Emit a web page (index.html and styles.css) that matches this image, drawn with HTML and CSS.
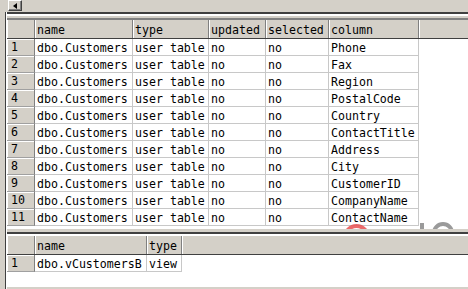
FILE: index.html
```html
<!DOCTYPE html>
<html lang="en">
<head>
    <meta charset="UTF-8">
    <title>Query Results</title>
    <link rel="stylesheet" href="styles.css">
</head>
<body>

<div class="window">
    <div class="hscroll">
        <div class="arrow-btn"><span class="arrow"></span></div>
    </div>

    <div class="body-row">
        <div class="edge"></div>

        <div class="panes">
            <div class="pane-lines"></div>

            <!-- first result set -->
            <div class="grid-pane grid-main">
                <div class="grid-row head cols-main">
                    <div class="cell rn"></div>
                    <div class="cell hd">name</div>
                    <div class="cell hd">type</div>
                    <div class="cell hd">updated</div>
                    <div class="cell hd">selected</div>
                    <div class="cell hd">column</div>
                    <div class="cell hd filler"></div>
                </div>
                <div id="mainRows"></div>

                <div class="mark mark-red"></div>
                <div class="mark mark-bar"></div>
                <div class="mark mark-ring"></div>
            </div>

            <div class="splitter"></div>

            <!-- second result set -->
            <div class="grid-pane grid-views">
                <div class="grid-row head cols-views">
                    <div class="cell rn"></div>
                    <div class="cell hd">name</div>
                    <div class="cell hd">type</div>
                    <div class="cell hd filler"></div>
                </div>
                <div class="grid-row cols-views">
                    <div class="cell rn">1</div>
                    <div class="cell">dbo.vCustomersB</div>
                    <div class="cell">view</div>
                    <div class="cell filler"></div>
                </div>
            </div>
        </div>
    </div>
</div>

<script>
    const columns = ["Phone", "Fax", "Region", "PostalCode", "Country", "ContactTitle",
                     "Address", "City", "CustomerID", "CompanyName", "ContactName"];

    const mainRows = document.getElementById("mainRows");
    columns.forEach((col, i) => {
        const row = document.createElement("div");
        row.className = "grid-row cols-main";
        row.innerHTML =
            `<div class="cell rn">${i + 1}</div>` +
            `<div class="cell">dbo.Customers</div>` +
            `<div class="cell">user table</div>` +
            `<div class="cell">no</div>` +
            `<div class="cell">no</div>` +
            `<div class="cell">${col}</div>` +
            `<div class="cell filler"></div>`;
        mainRows.appendChild(row);
    });
</script>

</body>
</html>
```

FILE: styles.css
```css
* {
    margin: 0;
    padding: 0;
    box-sizing: border-box;
}

body {
    background-color: #d4d0c8;
    font-family: "DejaVu Sans Mono", "Liberation Mono", monospace;
    font-size: 11.6px;
    color: #000;
    overflow: hidden;
}

.window {
    width: 468px;
    height: 289px;
    display: flex;
    flex-direction: column;
}

/* horizontal scrollbar at the top */
.hscroll {
    height: 12px;
    background-color: #d4d0c8;
    padding-left: 8px;
}

.arrow-btn {
    width: 14px;
    height: 11px;
    border-top: 1px solid #fff;
    border-left: 1px solid #fff;
    border-right: 1px solid #404040;
    border-bottom: 1px solid #404040;
    box-shadow: inset -1px -1px #808080;
    display: flex;
    align-items: center;
    justify-content: center;
}

.arrow {
    width: 0;
    height: 0;
    border-right: 4px solid #000;
    border-top: 3.5px solid transparent;
    border-bottom: 3.5px solid transparent;
    margin-right: 1px;
}

.body-row {
    flex: 1;
    display: flex;
}

.edge {
    width: 6px;
    background-color: #d4d0c8;
    border-right: 1px solid #404040;
}

.panes {
    flex: 1;
    display: flex;
    flex-direction: column;
    border-left: 1px solid #fff;
}

.pane-lines {
    height: 8px;
    border-top: 2px solid #404040;
    border-bottom: 2px solid #808080;
    box-shadow: inset 0 2px #fff;
    background-color: #d4d0c8;
}

.grid-pane {
    background-color: #fff;
    position: relative;
    overflow: hidden;
}

.grid-main {
    height: 209px;
}

.grid-views {
    flex: 1;
    border-bottom: 2px solid #d4d0c8;
}

.splitter {
    height: 7px;
    border-top: 3px solid #d4d0c8;
    border-bottom: 2px solid #fff;
    background-color: #404040;
}

/* grid rows */
.grid-row {
    display: grid;
    height: 17px;
}

.cols-main {
    grid-template-columns: 28px 98px 76px 57px 63px 90px 1fr;
}

.cols-views {
    grid-template-columns: 28px 112px 35px 1fr;
}

.cell {
    padding-left: 2px;
    padding-top: 1px;
    line-height: 16px;
    white-space: nowrap;
    overflow: hidden;
    border-right: 1px solid #c8c8c8;
    border-bottom: 1px solid #c8c8c8;
}

.cell.rn {
    background-color: #d4d0c8;
    padding-left: 4px;
    padding-top: 0;
    border-right: 1px solid #808080;
    border-bottom: 1px solid #a0a0a0;
    box-shadow: inset 1px 1px #fff;
}

.cell.filler {
    border: none;
}

.grid-row.head {
    height: 19px;
    background-color: #d4d0c8;
    border-bottom: 1px solid #404040;
}

.head .cell {
    padding-top: 2px;
    line-height: 16px;
    border-bottom: none;
    border-right: 1px solid #808080;
    box-shadow: inset 1px 0 #fff;
}

.head .cell.rn {
    border-bottom: none;
}

.head .cell.filler {
    border: none;
}

/* faint watermark peeking in at the bottom */
.mark {
    position: absolute;
}

.mark-red {
    left: 336px;
    top: 204px;
    width: 27px;
    height: 27px;
    border: 4px solid rgba(232, 80, 80, 0.85);
    border-radius: 50%;
}

.mark-bar {
    left: 413px;
    top: 203px;
    width: 4px;
    height: 20px;
    background-color: #9a9a9a;
}

.mark-ring {
    left: 425px;
    top: 202px;
    width: 22px;
    height: 22px;
    border: 4px solid #9a9a9a;
    border-radius: 50%;
}
```
